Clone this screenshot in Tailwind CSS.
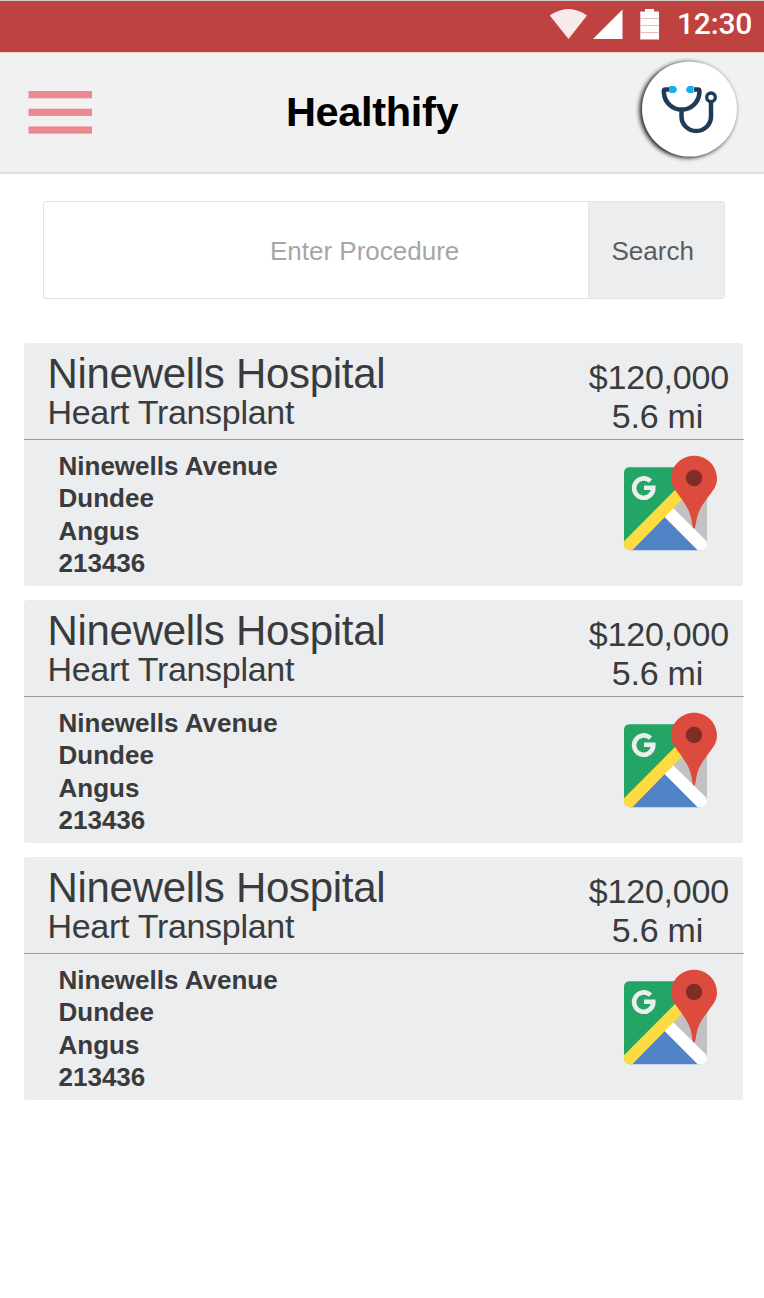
<!DOCTYPE html>
<html lang="en">
<head>
<meta charset="utf-8">
<title>Healthify</title>
<script src="https://cdn.jsdelivr.net/npm/@tailwindcss/browser@4"></script>
</head>
<body class="bg-white font-['Liberation_Sans',Arial,sans-serif] text-[#393b3d]">
<div class="flex h-[1298px] w-[764px] flex-col overflow-hidden">
  <div class="flex h-[52px] shrink-0 border-t border-[#d4cccc] bg-[#be423f]">
    <svg class="ml-[540px] h-[52px] w-[130px] shrink-0" viewBox="0 1 130 52">
      <path d="M9.800 15.500Q28.500 2.500 47 15.500L28.500 39Z" fill="#f9eaea"/>
      <path d="M53 39 82.500 9.500V39Z" fill="#fff"/>
      <path d="M100.300 11.500H105V9H114V11.500H119V39.500H100.300Z" fill="#fff"/>
      <path d="M100.300 18.500H119M100.300 25.500H119M100.300 32.500H119" stroke="#e9bcbc" stroke-width="1"/>
    </svg>
    <span class="ml-[7px] mt-[4px] whitespace-nowrap font-['Roboto',sans-serif] text-[30px] font-medium leading-[38px] tracking-[-.2px] text-white">12:30</span>
  </div>
  <header class="flex h-[122px] shrink-0 border-b-2 border-[#e0e0e0] bg-[#f1f1f1] shadow-[inset_0_1px_0_#f0cccb]">
    <svg class="ml-7 mt-[38px] h-[46px] w-[64px] shrink-0" viewBox="0 0 64 46" fill="#eb8991">
      <rect x=".5" y="1" width="63.500" height="7.300"/><rect x=".5" y="18.700" width="63.500" height="7.200"/><rect x=".5" y="36.400" width="63.500" height="7.200"/>
    </svg>
    <h1 class="ml-[194px] mt-[36px] w-[344px] text-[41.500px] font-bold leading-[48px] tracking-[-.35px] text-black">Healthify</h1>
    <svg class="-mt-0.5 h-[120px] w-[120px] shrink-0" viewBox="0 0 120 120">
      <defs><filter id="shade" x="-20%" y="-20%" width="140%" height="140%"><feGaussianBlur stdDeviation="1.900"/></filter></defs>
      <circle cx="57.500" cy="60" r="48" fill="#222" filter="url(#shade)"/>
      <circle cx="59.500" cy="59" r="47.500" fill="#fff"/>
      <g fill="none" stroke="#1e3b57" stroke-width="4.500">
        <path d="M39.500 39.500H35.200Q33.900 39.500 33.900 41V43A17.800 17.900 0 0 0 69.400 43V41Q69.400 39.500 68.100 39.500H64"/>
        <path d="M51.500 61V66.500A14.750 14.500 0 0 0 81 66.500V52"/>
        <circle cx="81" cy="47.300" r="4.300" stroke-width="3.300"/>
      </g>
      <path d="M39.500 36H44.500Q47 37.500 47 39.500T44.500 43H39.500ZM63.500 36H58.500Q56 37.500 56 39.500T58.500 43H63.500Z" fill="#19aeea"/>
    </svg>
  </header>
  <form class="ml-[43px] mt-[27px] flex h-[98px] w-[682px] shrink-0 overflow-hidden rounded-[3px] border border-[#e1e2e2] text-[26px] leading-[30px]">
    <div class="w-[545px] border-r border-[#e4e5e5] pl-[226px] pt-[34px] text-[#a6a6a6]">Enter Procedure</div>
    <div class="flex-1 bg-[#ecedef] pl-[22.500px] pt-[34px] text-[#5a5c5e]">Search</div>
  </form>
  <main id="results" class="ml-6 mt-11 flex flex-col gap-[14px]"></main>
</div>
<template id="card">
  <article class="h-[243px] w-[719px] rounded-[3px] bg-[#ecedef]">
    <div class="flex h-[97px] w-[720px] justify-between border-b border-[#999c9e]">
      <div class="pl-[23.500px] pt-[11px]">
        <h2 class="text-[42px] leading-[40px] tracking-[-.3px]">Ninewells Hospital</h2>
        <p class="text-[34px] leading-[36px] tracking-[-.3px]">Heart Transplant</p>
      </div>
      <div class="mr-[15px] pt-[15px] text-center text-[34px] leading-[39px] tracking-[-.2px]"><p>$120,000</p><p class="pr-[3px]">5.6 mi</p></div>
    </div>
    <div class="flex justify-between">
      <address class="pl-[34.500px] pt-[10.200px] text-[26px] font-bold not-italic leading-[32.200px]">Ninewells Avenue<br>Dundee<br>Angus<br>213436</address>
      <svg class="mr-[13px] mt-[5px] h-[120px] w-[120px]" viewBox="0 0 120 120">
        <path d="M20 22.200H82L71 60 50 85 20 105Q14 104 14 98V28Q14 22.200 20 22.200Z" fill="#23a566"/>
        <path d="M60 65 78 47H97V97L90 102Z" fill="#c2c2c2"/>
        <path d="M20 105.200 55 70 91 105.200Z" fill="#5083c5"/>
        <path d="M63.300 63.300 96 95.500Q99 103 91.500 105.200H87.700L54 71.500Z" fill="#fff"/>
        <path d="M14 96.300 70 40 77 49.500 22.300 105.200H20Q14 105.200 14 99Z" fill="#fedc41"/>
        <path d="M40.500 36.200A9.600 9.700 0 1 0 43.300 42.800H34" fill="none" stroke="#ecedee" stroke-width="4.600"/>
        <path d="M84 83.500C82 83.500 82.500 76 80 69C77.500 61.500 71.500 54 66.500 47C62.500 41 60.900 38 61 33C61.500 20.500 71.500 10.800 84 10.800C97 10.800 107 21 107 33.500C107 39.500 104.500 43.500 101.500 47.500C96.500 54.500 90.500 61.500 88 69C85.500 76 86 83.500 84 83.500Z" fill="#dd4b3e"/>
        <circle cx="84" cy="33" r="8.200" fill="#802c27"/>
      </svg>
    </div>
  </article>
</template>
<script>
const results = document.getElementById('results');
for (let i = 0; i < 3; i++) results.append(document.getElementById('card').content.cloneNode(true));
</script>
</body>
</html>
